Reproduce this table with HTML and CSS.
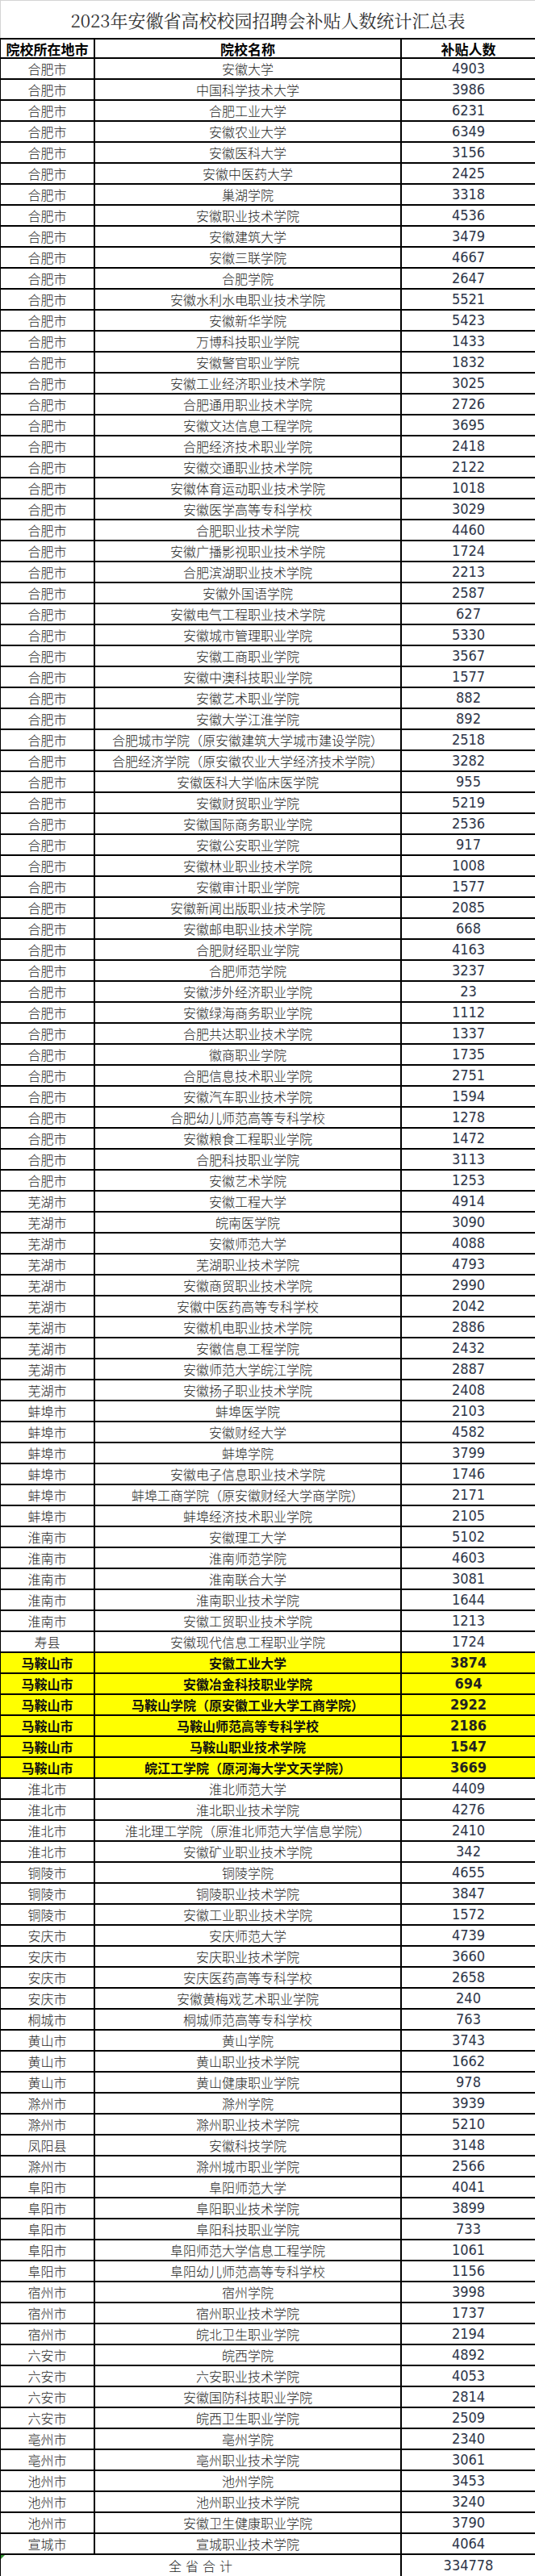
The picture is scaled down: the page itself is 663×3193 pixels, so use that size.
FILE: index.html
```html
<!DOCTYPE html>
<html lang="zh-CN">
<head>
<meta charset="utf-8">
<title>2023年安徽省高校校园招聘会补贴人数统计汇总表</title>
<link rel="stylesheet" href="styles.css">
</head>
<body>
<div class="sheet">
  <div class="title">2023年安徽省高校校园招聘会补贴人数统计汇总表</div>
  <div class="grid">
    <div class="r head"><span class="c">院校所在地市</span><span class="n">院校名称</span><span class="v">补贴人数</span></div>
    <div class="r"><span class="c">合肥市</span><span class="n">安徽大学</span><span class="v">4903</span></div>
    <div class="r"><span class="c">合肥市</span><span class="n">中国科学技术大学</span><span class="v">3986</span></div>
    <div class="r"><span class="c">合肥市</span><span class="n">合肥工业大学</span><span class="v">6231</span></div>
    <div class="r"><span class="c">合肥市</span><span class="n">安徽农业大学</span><span class="v">6349</span></div>
    <div class="r"><span class="c">合肥市</span><span class="n">安徽医科大学</span><span class="v">3156</span></div>
    <div class="r"><span class="c">合肥市</span><span class="n">安徽中医药大学</span><span class="v">2425</span></div>
    <div class="r"><span class="c">合肥市</span><span class="n">巢湖学院</span><span class="v">3318</span></div>
    <div class="r"><span class="c">合肥市</span><span class="n">安徽职业技术学院</span><span class="v">4536</span></div>
    <div class="r"><span class="c">合肥市</span><span class="n">安徽建筑大学</span><span class="v">3479</span></div>
    <div class="r"><span class="c">合肥市</span><span class="n">安徽三联学院</span><span class="v">4667</span></div>
    <div class="r"><span class="c">合肥市</span><span class="n">合肥学院</span><span class="v">2647</span></div>
    <div class="r"><span class="c">合肥市</span><span class="n">安徽水利水电职业技术学院</span><span class="v">5521</span></div>
    <div class="r"><span class="c">合肥市</span><span class="n">安徽新华学院</span><span class="v">5423</span></div>
    <div class="r"><span class="c">合肥市</span><span class="n">万博科技职业学院</span><span class="v">1433</span></div>
    <div class="r"><span class="c">合肥市</span><span class="n">安徽警官职业学院</span><span class="v">1832</span></div>
    <div class="r"><span class="c">合肥市</span><span class="n">安徽工业经济职业技术学院</span><span class="v">3025</span></div>
    <div class="r"><span class="c">合肥市</span><span class="n">合肥通用职业技术学院</span><span class="v">2726</span></div>
    <div class="r"><span class="c">合肥市</span><span class="n">安徽文达信息工程学院</span><span class="v">3695</span></div>
    <div class="r"><span class="c">合肥市</span><span class="n">合肥经济技术职业学院</span><span class="v">2418</span></div>
    <div class="r"><span class="c">合肥市</span><span class="n">安徽交通职业技术学院</span><span class="v">2122</span></div>
    <div class="r"><span class="c">合肥市</span><span class="n">安徽体育运动职业技术学院</span><span class="v">1018</span></div>
    <div class="r"><span class="c">合肥市</span><span class="n">安徽医学高等专科学校</span><span class="v">3029</span></div>
    <div class="r"><span class="c">合肥市</span><span class="n">合肥职业技术学院</span><span class="v">4460</span></div>
    <div class="r"><span class="c">合肥市</span><span class="n">安徽广播影视职业技术学院</span><span class="v">1724</span></div>
    <div class="r"><span class="c">合肥市</span><span class="n">合肥滨湖职业技术学院</span><span class="v">2213</span></div>
    <div class="r"><span class="c">合肥市</span><span class="n">安徽外国语学院</span><span class="v">2587</span></div>
    <div class="r"><span class="c">合肥市</span><span class="n">安徽电气工程职业技术学院</span><span class="v">627</span></div>
    <div class="r"><span class="c">合肥市</span><span class="n">安徽城市管理职业学院</span><span class="v">5330</span></div>
    <div class="r"><span class="c">合肥市</span><span class="n">安徽工商职业学院</span><span class="v">3567</span></div>
    <div class="r"><span class="c">合肥市</span><span class="n">安徽中澳科技职业学院</span><span class="v">1577</span></div>
    <div class="r"><span class="c">合肥市</span><span class="n">安徽艺术职业学院</span><span class="v">882</span></div>
    <div class="r"><span class="c">合肥市</span><span class="n">安徽大学江淮学院</span><span class="v">892</span></div>
    <div class="r"><span class="c">合肥市</span><span class="n">合肥城市学院（原安徽建筑大学城市建设学院）</span><span class="v">2518</span></div>
    <div class="r"><span class="c">合肥市</span><span class="n">合肥经济学院（原安徽农业大学经济技术学院）</span><span class="v">3282</span></div>
    <div class="r"><span class="c">合肥市</span><span class="n">安徽医科大学临床医学院</span><span class="v">955</span></div>
    <div class="r"><span class="c">合肥市</span><span class="n">安徽财贸职业学院</span><span class="v">5219</span></div>
    <div class="r"><span class="c">合肥市</span><span class="n">安徽国际商务职业学院</span><span class="v">2536</span></div>
    <div class="r"><span class="c">合肥市</span><span class="n">安徽公安职业学院</span><span class="v">917</span></div>
    <div class="r"><span class="c">合肥市</span><span class="n">安徽林业职业技术学院</span><span class="v">1008</span></div>
    <div class="r"><span class="c">合肥市</span><span class="n">安徽审计职业学院</span><span class="v">1577</span></div>
    <div class="r"><span class="c">合肥市</span><span class="n">安徽新闻出版职业技术学院</span><span class="v">2085</span></div>
    <div class="r"><span class="c">合肥市</span><span class="n">安徽邮电职业技术学院</span><span class="v">668</span></div>
    <div class="r"><span class="c">合肥市</span><span class="n">合肥财经职业学院</span><span class="v">4163</span></div>
    <div class="r"><span class="c">合肥市</span><span class="n">合肥师范学院</span><span class="v">3237</span></div>
    <div class="r"><span class="c">合肥市</span><span class="n">安徽涉外经济职业学院</span><span class="v">23</span></div>
    <div class="r"><span class="c">合肥市</span><span class="n">安徽绿海商务职业学院</span><span class="v">1112</span></div>
    <div class="r"><span class="c">合肥市</span><span class="n">合肥共达职业技术学院</span><span class="v">1337</span></div>
    <div class="r"><span class="c">合肥市</span><span class="n">徽商职业学院</span><span class="v">1735</span></div>
    <div class="r"><span class="c">合肥市</span><span class="n">合肥信息技术职业学院</span><span class="v">2751</span></div>
    <div class="r"><span class="c">合肥市</span><span class="n">安徽汽车职业技术学院</span><span class="v">1594</span></div>
    <div class="r"><span class="c">合肥市</span><span class="n">合肥幼儿师范高等专科学校</span><span class="v">1278</span></div>
    <div class="r"><span class="c">合肥市</span><span class="n">安徽粮食工程职业学院</span><span class="v">1472</span></div>
    <div class="r"><span class="c">合肥市</span><span class="n">合肥科技职业学院</span><span class="v">3113</span></div>
    <div class="r"><span class="c">合肥市</span><span class="n">安徽艺术学院</span><span class="v">1253</span></div>
    <div class="r"><span class="c">芜湖市</span><span class="n">安徽工程大学</span><span class="v">4914</span></div>
    <div class="r"><span class="c">芜湖市</span><span class="n">皖南医学院</span><span class="v">3090</span></div>
    <div class="r"><span class="c">芜湖市</span><span class="n">安徽师范大学</span><span class="v">4088</span></div>
    <div class="r"><span class="c">芜湖市</span><span class="n">芜湖职业技术学院</span><span class="v">4793</span></div>
    <div class="r"><span class="c">芜湖市</span><span class="n">安徽商贸职业技术学院</span><span class="v">2990</span></div>
    <div class="r"><span class="c">芜湖市</span><span class="n">安徽中医药高等专科学校</span><span class="v">2042</span></div>
    <div class="r"><span class="c">芜湖市</span><span class="n">安徽机电职业技术学院</span><span class="v">2886</span></div>
    <div class="r"><span class="c">芜湖市</span><span class="n">安徽信息工程学院</span><span class="v">2432</span></div>
    <div class="r"><span class="c">芜湖市</span><span class="n">安徽师范大学皖江学院</span><span class="v">2887</span></div>
    <div class="r"><span class="c">芜湖市</span><span class="n">安徽扬子职业技术学院</span><span class="v">2408</span></div>
    <div class="r"><span class="c">蚌埠市</span><span class="n">蚌埠医学院</span><span class="v">2103</span></div>
    <div class="r"><span class="c">蚌埠市</span><span class="n">安徽财经大学</span><span class="v">4582</span></div>
    <div class="r"><span class="c">蚌埠市</span><span class="n">蚌埠学院</span><span class="v">3799</span></div>
    <div class="r"><span class="c">蚌埠市</span><span class="n">安徽电子信息职业技术学院</span><span class="v">1746</span></div>
    <div class="r"><span class="c">蚌埠市</span><span class="n">蚌埠工商学院（原安徽财经大学商学院）</span><span class="v">2171</span></div>
    <div class="r"><span class="c">蚌埠市</span><span class="n">蚌埠经济技术职业学院</span><span class="v">2105</span></div>
    <div class="r"><span class="c">淮南市</span><span class="n">安徽理工大学</span><span class="v">5102</span></div>
    <div class="r"><span class="c">淮南市</span><span class="n">淮南师范学院</span><span class="v">4603</span></div>
    <div class="r"><span class="c">淮南市</span><span class="n">淮南联合大学</span><span class="v">3081</span></div>
    <div class="r"><span class="c">淮南市</span><span class="n">淮南职业技术学院</span><span class="v">1644</span></div>
    <div class="r"><span class="c">淮南市</span><span class="n">安徽工贸职业技术学院</span><span class="v">1213</span></div>
    <div class="r"><span class="c">寿县</span><span class="n">安徽现代信息工程职业学院</span><span class="v">1724</span></div>
    <div class="r hl"><span class="c">马鞍山市</span><span class="n">安徽工业大学</span><span class="v">3874</span></div>
    <div class="r hl"><span class="c">马鞍山市</span><span class="n">安徽冶金科技职业学院</span><span class="v">694</span></div>
    <div class="r hl"><span class="c">马鞍山市</span><span class="n">马鞍山学院（原安徽工业大学工商学院）</span><span class="v">2922</span></div>
    <div class="r hl"><span class="c">马鞍山市</span><span class="n">马鞍山师范高等专科学校</span><span class="v">2186</span></div>
    <div class="r hl"><span class="c">马鞍山市</span><span class="n">马鞍山职业技术学院</span><span class="v">1547</span></div>
    <div class="r hl"><span class="c">马鞍山市</span><span class="n">皖江工学院（原河海大学文天学院）</span><span class="v">3669</span></div>
    <div class="r"><span class="c">淮北市</span><span class="n">淮北师范大学</span><span class="v">4409</span></div>
    <div class="r"><span class="c">淮北市</span><span class="n">淮北职业技术学院</span><span class="v">4276</span></div>
    <div class="r"><span class="c">淮北市</span><span class="n">淮北理工学院（原淮北师范大学信息学院）</span><span class="v">2410</span></div>
    <div class="r"><span class="c">淮北市</span><span class="n">安徽矿业职业技术学院</span><span class="v">342</span></div>
    <div class="r"><span class="c">铜陵市</span><span class="n">铜陵学院</span><span class="v">4655</span></div>
    <div class="r"><span class="c">铜陵市</span><span class="n">铜陵职业技术学院</span><span class="v">3847</span></div>
    <div class="r"><span class="c">铜陵市</span><span class="n">安徽工业职业技术学院</span><span class="v">1572</span></div>
    <div class="r"><span class="c">安庆市</span><span class="n">安庆师范大学</span><span class="v">4739</span></div>
    <div class="r"><span class="c">安庆市</span><span class="n">安庆职业技术学院</span><span class="v">3660</span></div>
    <div class="r"><span class="c">安庆市</span><span class="n">安庆医药高等专科学校</span><span class="v">2658</span></div>
    <div class="r"><span class="c">安庆市</span><span class="n">安徽黄梅戏艺术职业学院</span><span class="v">240</span></div>
    <div class="r"><span class="c">桐城市</span><span class="n">桐城师范高等专科学校</span><span class="v">763</span></div>
    <div class="r"><span class="c">黄山市</span><span class="n">黄山学院</span><span class="v">3743</span></div>
    <div class="r"><span class="c">黄山市</span><span class="n">黄山职业技术学院</span><span class="v">1662</span></div>
    <div class="r"><span class="c">黄山市</span><span class="n">黄山健康职业学院</span><span class="v">978</span></div>
    <div class="r"><span class="c">滁州市</span><span class="n">滁州学院</span><span class="v">3939</span></div>
    <div class="r"><span class="c">滁州市</span><span class="n">滁州职业技术学院</span><span class="v">5210</span></div>
    <div class="r"><span class="c">凤阳县</span><span class="n">安徽科技学院</span><span class="v">3148</span></div>
    <div class="r"><span class="c">滁州市</span><span class="n">滁州城市职业学院</span><span class="v">2566</span></div>
    <div class="r"><span class="c">阜阳市</span><span class="n">阜阳师范大学</span><span class="v">4041</span></div>
    <div class="r"><span class="c">阜阳市</span><span class="n">阜阳职业技术学院</span><span class="v">3899</span></div>
    <div class="r"><span class="c">阜阳市</span><span class="n">阜阳科技职业学院</span><span class="v">733</span></div>
    <div class="r"><span class="c">阜阳市</span><span class="n">阜阳师范大学信息工程学院</span><span class="v">1061</span></div>
    <div class="r"><span class="c">阜阳市</span><span class="n">阜阳幼儿师范高等专科学校</span><span class="v">1156</span></div>
    <div class="r"><span class="c">宿州市</span><span class="n">宿州学院</span><span class="v">3998</span></div>
    <div class="r"><span class="c">宿州市</span><span class="n">宿州职业技术学院</span><span class="v">1737</span></div>
    <div class="r"><span class="c">宿州市</span><span class="n">皖北卫生职业学院</span><span class="v">2194</span></div>
    <div class="r"><span class="c">六安市</span><span class="n">皖西学院</span><span class="v">4892</span></div>
    <div class="r"><span class="c">六安市</span><span class="n">六安职业技术学院</span><span class="v">4053</span></div>
    <div class="r"><span class="c">六安市</span><span class="n">安徽国防科技职业学院</span><span class="v">2814</span></div>
    <div class="r"><span class="c">六安市</span><span class="n">皖西卫生职业学院</span><span class="v">2509</span></div>
    <div class="r"><span class="c">亳州市</span><span class="n">亳州学院</span><span class="v">2340</span></div>
    <div class="r"><span class="c">亳州市</span><span class="n">亳州职业技术学院</span><span class="v">3061</span></div>
    <div class="r"><span class="c">池州市</span><span class="n">池州学院</span><span class="v">3453</span></div>
    <div class="r"><span class="c">池州市</span><span class="n">池州职业技术学院</span><span class="v">3240</span></div>
    <div class="r"><span class="c">池州市</span><span class="n">安徽卫生健康职业学院</span><span class="v">3790</span></div>
    <div class="r"><span class="c">宣城市</span><span class="n">宣城职业技术学院</span><span class="v">4064</span></div>
    <div class="r total"><span class="sum">全省合计</span><span class="v">334778</span></div>
  </div>
</div>
</body>
</html>
```

FILE: styles.css
```css
html {
  overflow: hidden;
}

body {
  margin: 0;
  background: #ffffff;
  width: 663px;
  overflow: hidden;
}

.sheet {
  width: 663px;
  overflow: hidden;
}

.title {
  height: 47px;
  box-sizing: border-box;
  border-top: 1px solid #d4d4d4;
  border-left: 1px solid #d4d4d4;
  display: flex;
  align-items: center;
  justify-content: center;
  font-family: "Noto Serif CJK SC", "Noto Sans CJK SC", "DejaVu Serif", serif;
  font-size: 22px;
  color: #333333;
  white-space: nowrap;
}

.grid {
  border-left: 1px solid #000000;
  font-family: "Noto Sans CJK SC", "Noto Sans", sans-serif;
  font-size: 16px;
  font-weight: 300;
  color: #1e1e1e;
}

.r {
  display: grid;
  grid-template-columns: 117px 380px 1fr;
  height: 26px;
  box-sizing: border-box;
  border-bottom: 2px solid #000000;
}

.r > span {
  display: flex;
  align-items: center;
  justify-content: center;
  white-space: nowrap;
  line-height: 1;
  min-width: 0;
}

.c,
.n,
.sum {
  border-right: 2px solid #000000;
}

.v {
  font-family: "Liberation Sans Narrow", "DejaVu Sans Condensed", "Liberation Sans", sans-serif;
  font-size: 18px;
  font-weight: 400;
  color: #2d3548;
}

.head {
  border-top: 2px solid #000000;
}

.head > span {
  font-size: 17px;
  font-weight: 700;
  color: #000000;
}

.head .v {
  font-family: "Noto Sans CJK SC", "Noto Sans", sans-serif;
  font-size: 17px;
  color: #000000;
}

.hl {
  background: #ffff00;
}

.hl > span {
  font-weight: 700;
  color: #111111;
}

.hl .v {
  color: #222222;
}

.total {
  border-bottom: none;
}

.sum {
  grid-column: 1 / span 2;
  position: relative;
  letter-spacing: 5px;
  padding-left: 5px;
}

.sum::before {
  content: "";
  position: absolute;
  left: 0;
  top: 0;
  width: 0;
  height: 0;
  border-top: 5px solid #2f8f2f;
  border-right: 5px solid transparent;
}

.total .v {
  font-size: 18px;
}
```
